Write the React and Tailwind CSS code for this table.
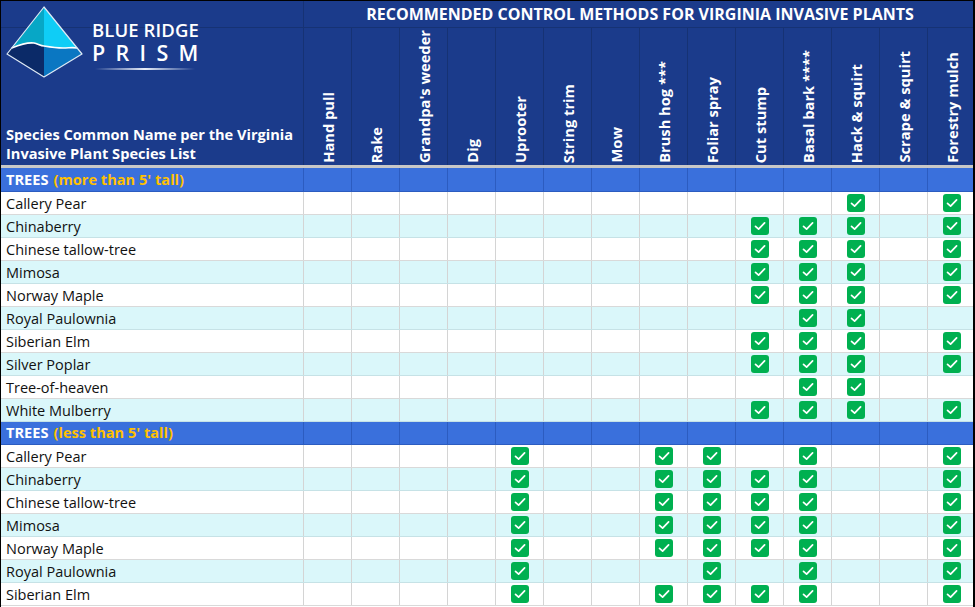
import React from 'react';

const METODOS = [
  'Hand pull', 'Rake', "Grandpa's weeder", 'Dig', 'Uprooter', 'String trim', 'Mow',
  'Brush hog ***', 'Foliar spray', 'Cut stump', 'Basal bark ****', 'Hack & squirt',
  'Scrape & squirt', 'Forestry mulch',
];

// indices of the recommended methods per species
const GRUPOS = [
  {
    titulo: 'TREES',
    sub: "(more than 5' tall)",
    linhas: [
      ['Callery Pear', [11, 13]],
      ['Chinaberry', [9, 10, 11, 13]],
      ['Chinese tallow-tree', [9, 10, 11, 13]],
      ['Mimosa', [9, 10, 11, 13]],
      ['Norway Maple', [9, 10, 11, 13]],
      ['Royal Paulownia', [10, 11]],
      ['Siberian Elm', [9, 10, 11, 13]],
      ['Silver Poplar', [9, 10, 11, 13]],
      ['Tree-of-heaven', [10, 11]],
      ['White Mulberry', [9, 10, 11, 13]],
    ],
  },
  {
    titulo: 'TREES',
    sub: "(less than 5' tall)",
    linhas: [
      ['Callery Pear', [4, 7, 8, 10, 13]],
      ['Chinaberry', [4, 7, 8, 9, 10, 13]],
      ['Chinese tallow-tree', [4, 7, 8, 9, 10, 13]],
      ['Mimosa', [4, 7, 8, 9, 10, 13]],
      ['Norway Maple', [4, 7, 8, 9, 10, 13]],
      ['Royal Paulownia', [4, 8, 10, 13]],
      ['Siberian Elm', [4, 7, 8, 9, 10, 13]],
    ],
  },
];

function Logo() {
  return (
    <svg width="90" height="80" viewBox="0 0 90 80" className="absolute left-0 top-0">
      <polygon points="43,6 6,53 43,76" fill="#0b2a68" />
      <polygon points="43,6 81,53 43,76" fill="#0a77c2" />
      <path d="M43,6 L10.7,47 C18,44 26,41 33,42 C37,43 40,45 43,45 Z" fill="#07a7c6" />
      <path d="M43,6 L43,45 C49,46 55,47 62,47 C68,47 72,46 76.1,47 Z" fill="#0fcdf6" />
      <path d="M10.7,47 C18,44 26,41 33,42 C37,43 40,45 43,45 C49,46 55,47 62,47 C68,47 72,46 76.1,47" fill="none" stroke="#ffffff" strokeWidth="1.6" />
      <polygon points="43,6 6,53 43,76 81,53" fill="none" stroke="#dfeaf5" strokeWidth="1.2" strokeLinejoin="round" />
    </svg>
  );
}

function Check() {
  return (
    <div className="w-[18px] h-[18px] rounded-[3px] bg-[#00b050] flex items-center justify-center">
      <svg width="14" height="14" viewBox="0 0 14 14">
        <path d="M2.5,7.3 L5.6,10.2 L11.6,3.8" fill="none" stroke="#ffffff" strokeWidth="1.7" strokeLinecap="round" strokeLinejoin="round" />
      </svg>
    </div>
  );
}

function LinhaGrupo({ titulo, sub, altura }) {
  return (
    <div className={`flex bg-[#3a70dc] border-b border-[#2c5cc0] ${altura}`}>
      <div className="w-[303px] shrink-0 border-r border-[#2c5cc0] px-[5px] flex items-center text-[14.6px] font-bold">
        <span className="text-white">{titulo}</span>
        <span className="text-[#ffc000] ml-[5px]">{sub}</span>
      </div>
      {METODOS.map(m => (
        <div key={m} className="w-[48px] shrink-0 border-r border-[#2c5cc0]" />
      ))}
    </div>
  );
}

function LinhaEspecie({ nome, marcados, listrada }) {
  const fundo = listrada ? 'bg-[#daf7fa] border-[#c6e2e6]' : 'bg-white border-[#d9d9d9]';
  return (
    <div className={`flex h-[23px] border-b ${fundo}`}>
      <div className="w-[303px] shrink-0 border-r border-[#d4d4d4] px-[5px] pt-[1px] flex items-center text-[14.5px] text-[#111]">
        {nome}
      </div>
      {METODOS.map((m, i) => (
        <div key={m} className="w-[48px] shrink-0 border-r border-[#d4d4d4] flex items-center justify-center">
          {marcados.includes(i) && <Check />}
        </div>
      ))}
    </div>
  );
}

export default function App() {
  return (
    <div className="w-[975px] h-[607px] bg-black overflow-hidden pt-[1px] pl-[1px]">
      <div className="w-[972px] h-[606px] overflow-hidden bg-white font-['Open_Sans',sans-serif]">
        <div className="w-[1000px]">
          {/* cabeçalho */}
          <div className="flex h-[164px] bg-[#1b3b8b] text-white">
            <div className="relative w-[303px] shrink-0 border-r border-[#163274] flex flex-col">
              <div className="h-[27px] border-b border-[#163274]" />
              <div className="flex-1 flex flex-col justify-end px-[5px] pb-[2px] text-[14.6px] font-bold leading-[19px]">
                <div>Species Common Name per the Virginia</div>
                <div>Invasive Plant Species List</div>
              </div>
              <Logo />
              <div className="absolute left-[91px] top-[17px] flex flex-col">
                <span className="text-[18.5px] font-semibold leading-[23px] tracking-[0.1px]">BLUE RIDGE</span>
                <span className="text-[21.5px] font-semibold leading-[24px] tracking-[10.3px]">PRISM</span>
                <div className="mt-[3px] ml-[3px] h-[2px] w-[100px] bg-gradient-to-r from-transparent via-[#e8eef8] to-transparent" />
              </div>
            </div>
            <div className="flex flex-col">
              <div className="h-[27px] border-b border-[#163274] w-[672px] flex items-center justify-center text-[16px] font-bold">
                RECOMMENDED CONTROL METHODS FOR VIRGINIA INVASIVE PLANTS
              </div>
              <div className="flex flex-1">
                {METODOS.map(m => (
                  <div key={m} className="w-[48px] shrink-0 border-r border-[#163274] flex flex-col items-center justify-end pb-[2px]">
                    <span className="[writing-mode:vertical-rl] rotate-180 text-[14.7px] font-bold leading-[18px] whitespace-nowrap">
                      {m}
                    </span>
                  </div>
                ))}
              </div>
            </div>
          </div>
          <div className="h-[3px] bg-[#c8c8c8]" />

          {GRUPOS.map((g, gi) => (
            <div key={gi}>
              <LinhaGrupo titulo={g.titulo} sub={g.sub} altura={gi === 0 ? 'h-[24px]' : 'h-[23px]'} />
              {g.linhas.map(([nome, marcados], i) => (
                <LinhaEspecie key={nome} nome={nome} marcados={marcados} listrada={i % 2 === 1} />
              ))}
            </div>
          ))}
        </div>
      </div>
    </div>
  );
}
